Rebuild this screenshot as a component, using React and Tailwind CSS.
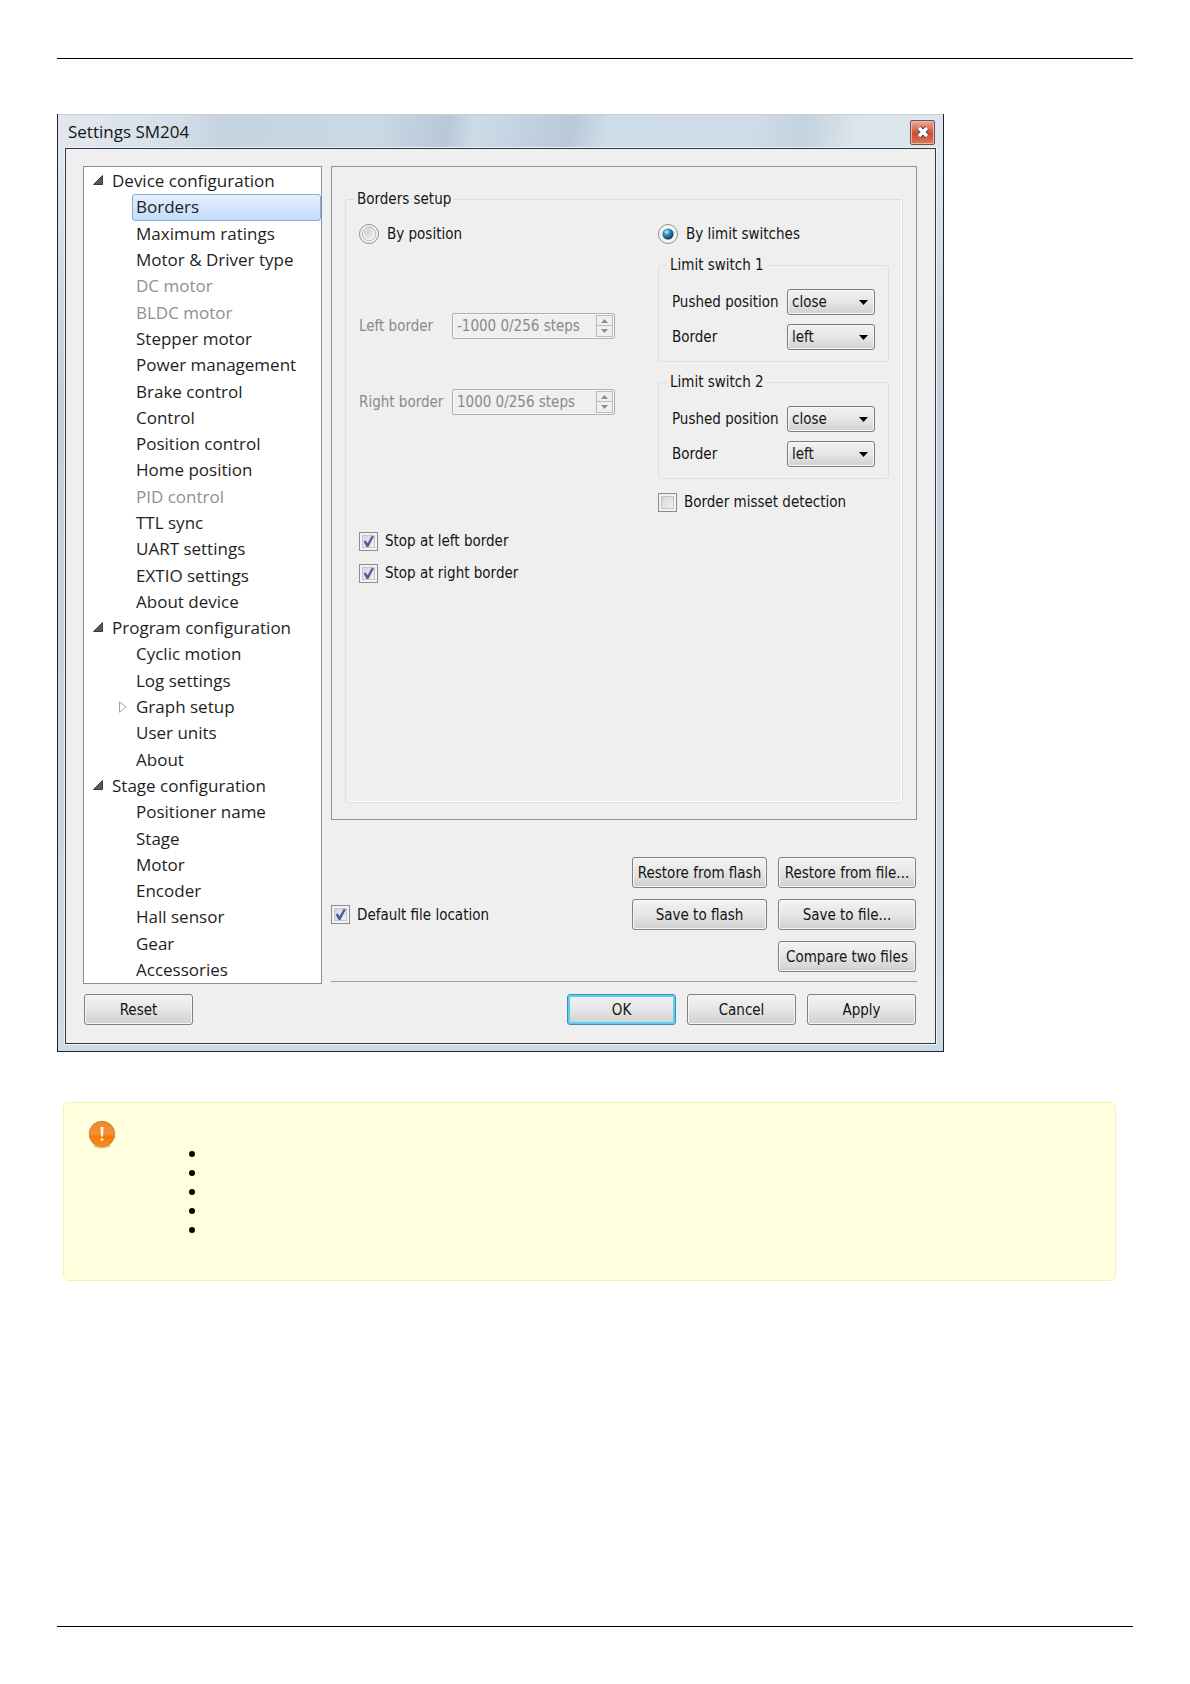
import { useState } from 'react';
import clsx from 'clsx';

const TREE = [
  {
    label: 'Device configuration',
    items: [
      { label: 'Borders' },
      { label: 'Maximum ratings' },
      { label: 'Motor & Driver type' },
      { label: 'DC motor', disabled: true },
      { label: 'BLDC motor', disabled: true },
      { label: 'Stepper motor' },
      { label: 'Power management' },
      { label: 'Brake control' },
      { label: 'Control' },
      { label: 'Position control' },
      { label: 'Home position' },
      { label: 'PID control', disabled: true },
      { label: 'TTL sync' },
      { label: 'UART settings' },
      { label: 'EXTIO settings' },
      { label: 'About device' },
    ],
  },
  {
    label: 'Program configuration',
    items: [
      { label: 'Cyclic motion' },
      { label: 'Log settings' },
      { label: 'Graph setup', expandable: true },
      { label: 'User units' },
      { label: 'About' },
    ],
  },
  {
    label: 'Stage configuration',
    items: [
      { label: 'Positioner name' },
      { label: 'Stage' },
      { label: 'Motor' },
      { label: 'Encoder' },
      { label: 'Hall sensor' },
      { label: 'Gear' },
      { label: 'Accessories' },
    ],
  },
];

function PushButton({ children, primary, className }) {
  return (
    <button
      type="button"
      className={clsx(
        'h-[31px] rounded-[3px] border whitespace-nowrap bg-linear-to-b from-[#f3f3f3] via-[#e6e6e6] via-50% to-[#cfcfcf]',
        primary
          ? 'border-[#3c8fb8] shadow-[inset_0_0_0_2px_#5fcdee]'
          : 'border-[#808080] shadow-[inset_0_0_0_1px_#f6f6f6]',
        className
      )}
    >
      {children}
    </button>
  );
}

function CheckBox({ id, label, defaultChecked }) {
  return (
    <div className="flex h-5 items-center gap-[7px]">
      <span className="grid">
        <input
          id={id}
          type="checkbox"
          defaultChecked={defaultChecked}
          className="peer col-start-1 row-start-1 size-[19px] appearance-none border border-[#8a8c8e] bg-linear-to-br from-[#cdd0d4] to-[#f6f6f6] shadow-[inset_0_0_0_2px_#f2f2f2,inset_0_0_0_3px_#c3c6c9]"
        />
        <svg
          viewBox="0 0 19 19"
          className="pointer-events-none invisible col-start-1 row-start-1 size-[19px] peer-checked:visible"
        >
          <path d="M4.6 9.4 L6.8 8.4 L8.6 11.2 L12.6 4 L15 4.2 L9.4 15 L7.6 15 Z" fill="#4f5c9e" />
        </svg>
      </span>
      <label htmlFor={id}>{label}</label>
    </div>
  );
}

function Radio({ id, label, checked, onChange }) {
  return (
    <div className="flex h-5 items-center gap-2">
      <span className="grid">
        <input
          id={id}
          type="radio"
          name="borders-mode"
          checked={checked}
          onChange={onChange}
          className="col-start-1 row-start-1 size-5 appearance-none rounded-full border border-[#8e8f8f] bg-[#f4f4f4]"
        />
        <svg viewBox="0 0 20 20" className="pointer-events-none col-start-1 row-start-1 size-5">
          <defs>
            <radialGradient id={`${id}-fill`} cx="0.38" cy="0.32" r="0.7">
              <stop offset="0" stopColor={checked ? '#c9f1fb' : '#d2d4d6'} />
              <stop offset="0.4" stopColor={checked ? '#2f93c4' : '#dddddd'} />
              <stop offset="1" stopColor={checked ? '#0b2f4e' : '#f2f2f2'} />
            </radialGradient>
          </defs>
          {!checked && <circle cx="10" cy="10" r="6.8" fill="none" stroke="#b4b6b8" />}
          <circle cx="10" cy="10" r={checked ? 5.6 : 6} fill={`url(#${id}-fill)`} />
        </svg>
      </span>
      <label htmlFor={id}>{label}</label>
    </div>
  );
}

function SpinBox({ id, label, value }) {
  return (
    <div className="flex items-center text-[#8a8a8a]">
      <label htmlFor={id} className="w-[93px]">
        {label}
      </label>
      <div className="flex h-[26px] w-[163px] items-center rounded-[2px] border border-[#afafaf] pr-px shadow-[inset_0_0_0_1px_#f8f8f8]">
        <input id={id} type="text" disabled defaultValue={value} className="w-full min-w-0 flex-1 pl-1" />
        <div className="flex w-[17px] flex-col border border-[#bcbcbc]">
          <button type="button" disabled aria-label={`${label} up`} className="flex h-[10px] items-center justify-center border-b border-[#bcbcbc]">
            <svg viewBox="0 0 7 4" className="h-1 w-[7px]">
              <path d="M0 4 L3.5 0 L7 4 Z" fill="#8d8d8d" />
            </svg>
          </button>
          <button type="button" disabled aria-label={`${label} down`} className="flex h-[10px] items-center justify-center">
            <svg viewBox="0 0 7 4" className="h-1 w-[7px]">
              <path d="M0 0 L3.5 4 L7 0 Z" fill="#8d8d8d" />
            </svg>
          </button>
        </div>
      </div>
    </div>
  );
}

function SelectRow({ id, label, options }) {
  return (
    <div className="flex items-center justify-between">
      <label htmlFor={id} className="whitespace-nowrap">
        {label}
      </label>
      <div className="grid w-[88px] items-center">
        <select
          id={id}
          className="col-start-1 row-start-1 h-[26px] w-full appearance-none rounded-[3px] border border-[#7c7c7c] bg-linear-to-b from-[#f2f2f2] via-[#e6e6e6] via-50% to-[#d0d0d0] pl-1 shadow-[inset_0_0_0_1px_#f6f6f6]"
        >
          {options.map((option) => (
            <option key={option}>{option}</option>
          ))}
        </select>
        <svg viewBox="0 0 9 5" className="pointer-events-none col-start-1 row-start-1 mr-[7px] h-[5px] w-[9px] justify-self-end">
          <path d="M0 0 H9 L4.5 5 Z" fill="#000" />
        </svg>
      </div>
    </div>
  );
}

function LimitSwitch({ number }) {
  return (
    <fieldset className="rounded-[3px] border border-[#d9dfe2] px-[13px] pb-[11px]">
      <legend className="-ml-[5px] px-[3px] leading-5">Limit switch {number}</legend>
      <div className="flex flex-col gap-[9px] pt-[14px]">
        <SelectRow id={`pushed-${number}`} label="Pushed position" options={['close', 'open']} />
        <SelectRow id={`border-${number}`} label="Border" options={['left', 'right']} />
      </div>
    </fieldset>
  );
}

function SettingsTree() {
  const [selected, setSelected] = useState('Borders');

  return (
    <nav className="flex w-[239px] shrink-0 flex-col border border-[#8b8f94] bg-white pt-px font-['Open_Sans','Noto_Sans',sans-serif] text-[17px] leading-6 text-[#1e1e1e]">
      {TREE.map((group) => (
        <div key={group.label} className="contents">
          <div className="flex flex-1 items-center pl-[9px]">
            <svg viewBox="0 0 10 10" className="mr-[9px] mb-[2px] size-[10px]">
              <path d="M9.5 0.5 V9.5 H0.5 Z" fill="#595959" stroke="#3a3a3a" strokeLinejoin="round" />
            </svg>
            {group.label}
          </div>
          {group.items.map((item) => (
            <div key={item.label} className="flex flex-1 items-stretch">
              <span className="flex w-12 items-center justify-end pr-[5px]">
                {item.expandable && (
                  <svg viewBox="0 0 8 12" className="h-3 w-2">
                    <path d="M0.5 0.8 L7 6 L0.5 11.2 Z" fill="#fff" stroke="#a0a0a0" />
                  </svg>
                )}
              </span>
              <button
                type="button"
                disabled={item.disabled}
                onClick={() => setSelected(item.label)}
                className={clsx(
                  'flex flex-1 items-center rounded-[3px] border pl-[3px] text-left whitespace-nowrap',
                  item.disabled && 'text-[#909090]',
                  selected === item.label
                    ? 'border-[#84acdd] bg-linear-to-b from-[#e4effd] to-[#c4dcfc]'
                    : 'border-transparent'
                )}
              >
                {item.label}
              </button>
            </div>
          ))}
        </div>
      ))}
    </nav>
  );
}

function BordersPanel() {
  const [mode, setMode] = useState('limit');

  return (
    <div className="border border-[#8f9396] px-[13px] pt-[22px] pb-4">
      <fieldset className="min-h-[614px] rounded-[3px] border border-[#dadfe2] px-[13px] shadow-[inset_-1px_-1px_0_#fff]">
        <legend className="-ml-[5px] px-[3px] leading-5">Borders setup</legend>
        <div className="flex justify-between pt-[15px]">
          <div>
            <Radio id="by-position" label="By position" checked={mode === 'position'} onChange={() => setMode('position')} />
            <div className="flex flex-col gap-[50px] pt-[69px]">
              <SpinBox id="left-border" label="Left border" value="-1000 0/256 steps" />
              <SpinBox id="right-border" label="Right border" value="1000 0/256 steps" />
            </div>
            <div className="flex flex-col gap-3 pt-[116px]">
              <CheckBox id="stop-left" label="Stop at left border" defaultChecked />
              <CheckBox id="stop-right" label="Stop at right border" defaultChecked />
            </div>
          </div>
          <div className="w-[231px]">
            <Radio id="by-limit" label="By limit switches" checked={mode === 'limit'} onChange={() => setMode('limit')} />
            <div className="flex flex-col gap-[10px] pt-[11px] pb-[13px]">
              <LimitSwitch number={1} />
              <LimitSwitch number={2} />
            </div>
            <CheckBox id="misset" label="Border misset detection" />
          </div>
        </div>
      </fieldset>
    </div>
  );
}

function SettingsWindow() {
  return (
    <section className="w-full max-w-[887px] border border-t-0 border-[#20242a] bg-linear-to-b from-[#dfe6ee] from-5% via-[#c3cfdc] via-30% to-[#cddbe6] px-[7px] pb-[7px] font-['DejaVu_Sans_Condensed','DejaVu_Sans',sans-serif] text-[15px] leading-5 text-[#141414]">
      <header className="-mx-[7px] flex h-[34px] items-center justify-between border-t border-[#c9ced4] bg-[linear-gradient(100deg,#e3e8ee_0%,#d5dfe9_13%,#c5d2df_19%,#cbd8e5_36%,#b9c7d7_44%,#cddbe8_47%,#b9c9d9_58%,#cfdde9_62%,#d0dde8_78%,#c4d2df_84%,#dbe5ec_90%,#dde6ed_100%)] pr-2 pl-[10px]">
        <h1 className="font-['Open_Sans','Noto_Sans',sans-serif] text-[17px]">Settings SM204</h1>
        <button
          type="button"
          aria-label="Close"
          className="mt-px flex size-[25px] items-center justify-center rounded-[2px] border border-[#6f5359] bg-linear-to-b from-[#eba99b] via-[#cf4b32] via-55% to-[#d9785f] shadow-[inset_0_0_0_1px_#efb5a8]"
        >
          <svg viewBox="0 0 14 14" className="size-[14px]">
            <path d="M3 3 L11 11 M11 3 L3 11" stroke="#5c4a50" strokeWidth="5.6" />
            <path d="M3 3 L11 11 M11 3 L3 11" stroke="#fff" strokeWidth="3.4" />
          </svg>
        </button>
      </header>

      <div className="border border-[#33383d] bg-[#efefef] pt-[17px] pr-[18px] pb-[18px] pl-[17px] shadow-[0_0_0_1px_#eef3f7]">
        <div className="flex gap-[9px]">
          <SettingsTree />
          <div className="mb-[2px] min-w-0 flex-1 border-b border-[#a0a0a0] pb-[9px]">
            <BordersPanel />
            <div className="flex items-center justify-between pt-[37px] pr-px">
              <CheckBox id="default-location" label="Default file location" defaultChecked />
              <div className="grid grid-cols-[135px_138px] gap-[11px]">
                <PushButton>Restore from flash</PushButton>
                <PushButton>Restore from file...</PushButton>
                <PushButton>Save to flash</PushButton>
                <PushButton>Save to file...</PushButton>
                <PushButton className="col-start-2">Compare two files</PushButton>
              </div>
            </div>
          </div>
        </div>

        <div className="flex gap-[11px] px-px pt-[10px]">
          <PushButton className="mr-auto w-[109px]">Reset</PushButton>
          <PushButton primary className="w-[109px]">OK</PushButton>
          <PushButton className="w-[109px]">Cancel</PushButton>
          <PushButton className="w-[109px]">Apply</PushButton>
        </div>
      </div>
    </section>
  );
}

function WarningNote() {
  return (
    <aside className="mt-[50px] mr-[17px] ml-[6px] flex min-h-[179px] items-start rounded-[6px] border border-[#fbeeb0] bg-[#ffffdd] pt-[17px] pl-[24px]">
      <svg viewBox="0 0 28 30" className="h-[30px] w-7" role="img" aria-label="Important">
        <defs>
          <linearGradient id="note-fill" x1="0" y1="0" x2="0" y2="1">
            <stop offset="0" stopColor="#e88a2c" />
            <stop offset="0.5" stopColor="#f39034" />
            <stop offset="0.6" stopColor="#f57a08" />
            <stop offset="1" stopColor="#ff8a10" />
          </linearGradient>
        </defs>
        <ellipse cx="14" cy="25.5" rx="9" ry="3" fill="#b9b58a" opacity="0.6" />
        <circle cx="14" cy="14" r="12.8" fill="url(#note-fill)" stroke="#c98a4a" />
        <path d="M12.4 7 H15.6 L15 16.5 H13 Z" fill="#fff3e4" />
        <circle cx="14" cy="19.5" r="1.6" fill="#ffe3c4" />
      </svg>
      <ul className="pt-6 pl-[73px]">
        {[1, 2, 3, 4, 5].map((line) => (
          <li key={line} className="flex h-[19px] items-center">
            <span className="size-[6px] rounded-full bg-black" />
          </li>
        ))}
      </ul>
    </aside>
  );
}

export default function App() {
  return (
    <div className="flex min-h-screen flex-col bg-white px-[57px] pt-[58px] pb-[57px]">
      <hr className="border-black" />
      <main className="pt-[55px]">
        <SettingsWindow />
        <WarningNote />
      </main>
      <hr className="mt-auto border-black" />
    </div>
  );
}
